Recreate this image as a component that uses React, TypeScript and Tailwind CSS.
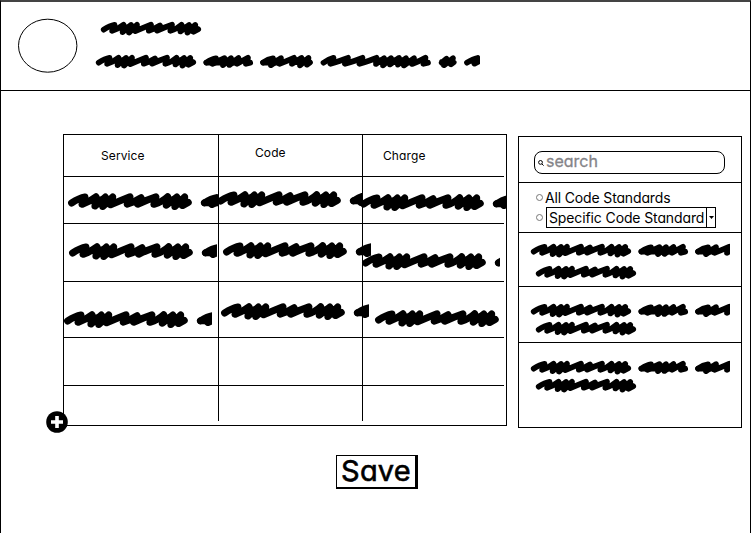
import React from "react";

const WORDS = [
  "M3.7 9.7 Q10 5.5 14.5 4.8 L12.2 10.8 Q18 9 23.5 4.7 L22.6 12.2 31 4.9 29 12.6 37 4.8 35.3 11.2 Q44 7.5 51 4.7 L48.8 10.7 Q54 9.2 60 5.5 L57.2 10.7 Q65 7 72 4.7 L70.4 10.8 Q77 9 81.5 4.7 L80.4 11.5 89 4.9 87.4 12.6 95.3 4.9 93.5 11.8 98.2 9.2",
  "M24 9.5 H35 M24 7.4 H34 M82 9.2 H97 M82 7.4 H95",
  "M111.3 9.6 Q117 6 121 5.4 L117.4 10.9 129.5 5.2 128 12.2 136 5.2 134.5 12 143.5 4.9 142 10.8 153 4.8 151 10.8 155.2 9.7",
  "M111.5 9.6 H143 M117 7.5 H142",
  "M168 9.6 Q173 6 178 5.3 L176 12.2 186 5.2 184.5 10.8 Q193 7.5 199 4.8 L197 10.8 206.5 4.9 205 12.4 213.5 4.9 212 11.6 215 9.4",
  "M168.3 9.6 H185 M173 7.6 H184 M198 9.2 H214 M200 7.4 H213",
  "M228.5 9.7 Q234 5.8 238.5 4.8 L235.5 10.8 Q246 7.5 253 4.8 L250 10.8 Q261 7.5 267.5 4.8 L264.5 10.8 Q275 7.5 281.5 4.8 L281 11 289 5.2 288 12.4 296 5.2 295 11.4 304 4.9 303 11.6 311 5.2 309 12.4 319 5.2 317 11 Q325 8 330.5 4.8 L328.5 10.8 333 9.7",
  "M282 9.2 H314 M283 7.4 H312",
  "M346.7 9.7 351.5 5.8 349 12.2 358 5.2 356 11.4 358.7 9.2 M347 8.8 H358",
  "M372 9.7 Q378 5.8 382.5 5 L379.5 10.7 387 6.8",
];

function Scribble({ width, scale = 1, className = "" }: { width: number; scale?: number; className?: string }) {
  const height = 17 * scale;
  return (
    <svg
      aria-hidden="true"
      width={width}
      height={height}
      viewBox={`0 0 ${width / scale} 17`}
      className={`relative z-10 block shrink-0 fill-none stroke-black stroke-[5.7] ${className}`}
      strokeLinecap="round"
      strokeLinejoin="round"
    >
      {WORDS.map((d) => <path key={d} d={d} />)}
    </svg>
  );
}

const cells = [
  [
    { c: "ml-[3px] mt-[14px]", w: 151 },
    { c: "-ml-[3px] mt-[12px]", w: 146 },
    { c: "-ml-[4px] mt-[15px]", w: 147 },
  ],
  [
    { c: "ml-[4px] mt-[17px]", w: 149 },
    { c: "ml-[3px] mt-[16px]", w: 149 },
    { c: "-ml-[2px] mt-[27px]", w: 139 },
  ],
  [
    { c: "-ml-[1px] mt-[27px]", w: 149 },
    { c: "ml-[1px] mt-[19px]", w: 149 },
    { c: "ml-[11px] mt-[26px]", w: 128 },
  ],
];

const CELL = "flex items-start border-b border-r border-black min-w-0 [&:nth-child(3n)]:border-r-0";

export default function App() {
  return (
    <div className="flex h-[533px] w-[751px] flex-col overflow-hidden border-x border-t-2 border-x-black border-t-[#444] bg-white font-['Inter','Liberation_Sans',sans-serif] text-black [font-feature-settings:'cv11']">
      <header className="flex h-[89px] shrink-0 border-b border-black">
        <svg className="ml-[17px] mt-[16px] h-[56px] w-[60px] fill-none stroke-black" viewBox="0 0 60 56" aria-hidden="true">
          <ellipse cx="29.7" cy="27.7" rx="29.2" ry="26.5" />
        </svg>
        <div className="ml-[17px] flex flex-col">
          <Scribble width={102} className="ml-[5px] mt-[18px]" />
          <Scribble width={385} className="mt-[16px]" />
        </div>
      </header>

      <main className="flex pl-[62px]">
        <section className="relative mt-[43px] h-[292px] w-[444px] shrink-0 border border-black">
          <div className="grid w-[440px] grid-cols-[155px_144px_141px] grid-rows-[42px_47px_58px_56px_48px_35px]">
            <div className={CELL}><span className="ml-[37px] mt-[13px] text-[12px] leading-[16px] tracking-[0.1px]">Service</span></div>
            <div className={CELL}><span className="ml-[36px] mt-[10px] text-[12px] leading-[16px] tracking-[0.1px]">Code</span></div>
            <div className={CELL}><span className="ml-[20px] mt-[13px] text-[12px] leading-[16px] tracking-[0.1px]">Charge</span></div>
            {cells.map((row, i) => row.map((s, j) => (
              <div key={`${i}-${j}`} className={CELL}>
                <Scribble width={s.w} scale={1.235} className={s.c} />
              </div>
            )))}
            <div className={CELL} /><div className={CELL} /><div className={CELL} />
            <div className="border-r border-black" /><div className="border-r border-black" /><div />
          </div>
          <svg className="absolute -left-[18px] top-[276px] h-[22px] w-[22px]" viewBox="0 0 22 22" aria-label="Add row">
            <circle cx="11" cy="11" r="10.8" />
            <path d="M11 5v12M5 11h12" stroke="white" strokeWidth="3.6" />
          </svg>
        </section>

        <aside className="ml-[11px] mt-[45px] flex h-[292px] w-[224px] shrink-0 flex-col border border-black">
          <div className="h-[46px] border-b border-black pl-[15px] pt-[14px]">
            <div className="flex h-[23px] w-[191px] items-center rounded-[8px] border border-black pl-[3px]">
              <svg className="h-[6px] w-[6px] fill-none stroke-black" viewBox="0 0 6 6" aria-hidden="true">
                <circle cx="2.5" cy="2.4" r="1.9" />
                <path d="m4 4 1.6 1.6" />
              </svg>
              <span className="-mt-[3px] ml-[2px] text-[16px] leading-[20px] text-[#858488] [-webkit-text-stroke:0.3px_#858488]">search</span>
            </div>
          </div>
          <div className="flex h-[50px] flex-col border-b border-black pl-[17px] pt-[5px]">
            <label className="flex h-[19px] items-center text-[14px]">
              <i className="h-[7px] w-[7px] rounded-full border border-[#777]" />
              <span className="ml-[2px] whitespace-nowrap tracking-[-0.15px]">All Code Standards</span>
            </label>
            <div className="flex h-[21px] items-center text-[14px]">
              <i className="h-[7px] w-[7px] rounded-full border border-[#777]" />
              <div className="ml-[3px] flex h-[21px] w-[170px] items-center border border-black pl-[2px]">
                <span className="-mt-px w-[157px] whitespace-nowrap tracking-[-0.12px]">Specific Code Standard</span>
                <span className="flex h-full flex-1 items-center justify-center border-l border-black">
                  <svg className="h-[3px] w-[5px]" viewBox="0 0 5 3" aria-hidden="true"><path d="M0 0h5L2.5 3z" /></svg>
                </span>
              </div>
            </div>
          </div>
          <div className="h-[54px] border-b border-black pl-[11px] pt-[9px]">
            <Scribble width={200} />
            <Scribble width={102} className="ml-[5px] mt-[5px]" />
          </div>
          <div className="h-[56px] border-b border-black pl-[11px] pt-[15px]">
            <Scribble width={200} />
            <Scribble width={102} className="ml-[5px] mt-[1px]" />
          </div>
          <div className="pl-[11px] pt-[16px]">
            <Scribble width={200} />
            <Scribble width={102} className="ml-[5px] mt-[1px]" />
          </div>
        </aside>
      </main>

      <button className="ml-[335px] mt-[27px] flex h-[34px] w-[82px] shrink-0 items-center justify-center border-b-2 border-l border-r-[3px] border-t border-black text-[29px] leading-none [-webkit-text-stroke:0.6px_black]">
        <span className="-mt-[3px] tracking-[0.2px]">Save</span>
      </button>
    </div>
  );
}
